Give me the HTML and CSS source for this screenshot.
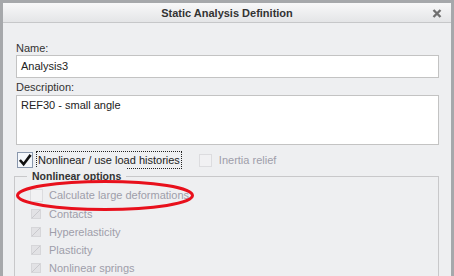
FILE: index.html
```html
<!DOCTYPE html>
<html lang="en">
<head>
    <meta charset="UTF-8">
    <title>Static Analysis Definition</title>
    <link rel="stylesheet" href="styles.css">
</head>
<body>
    <div class="window">
        <div class="titlebar">
            <span class="title">Static Analysis Definition</span>
            <svg class="close" width="10" height="9" viewBox="0 0 10 9">
                <path d="M1.5 1 L8.5 8 M8.5 1 L1.5 8" stroke="#707070" stroke-width="2.4"/>
            </svg>
        </div>

        <div class="content">
            <label class="field-label">Name:</label>
            <div class="input">Analysis3</div>

            <label class="field-label">Description:</label>
            <div class="textarea">REF30 - small angle</div>

            <div class="option-row">
                <div class="check-item">
                    <span class="box box-big">
                        <svg width="15" height="14" viewBox="0 0 15 14">
                            <path d="M2 7 L6 11.5 L13.5 1.5" fill="none" stroke="#111" stroke-width="2.8"/>
                        </svg>
                    </span>
                    <span class="focus-label">Nonlinear / use load histories</span>
                </div>
                <div class="check-item disabled inertia">
                    <span class="box"></span>
                    <span>Inertia relief</span>
                </div>
            </div>

            <div class="group">
                <div class="legend">Nonlinear options</div>
                <div class="group-items">
                    <div class="check-item disabled first">
                        <span class="box"></span>
                        <span>Calculate large deformations</span>
                    </div>
                    <div class="check-item disabled small">
                        <span class="mini"></span>
                        <span>Contacts</span>
                    </div>
                    <div class="check-item disabled small">
                        <span class="mini"></span>
                        <span>Hyperelasticity</span>
                    </div>
                    <div class="check-item disabled small">
                        <span class="mini"></span>
                        <span>Plasticity</span>
                    </div>
                    <div class="check-item disabled small">
                        <span class="mini"></span>
                        <span>Nonlinear springs</span>
                    </div>
                </div>
            </div>

            <svg class="highlight" width="184" height="36" viewBox="0 0 184 36">
                <ellipse cx="90" cy="17.5" rx="87.5" ry="14" fill="none" stroke="#e8101c" stroke-width="3"/>
            </svg>
        </div>
    </div>
</body>
</html>
```

FILE: styles.css
```css
body {
    margin: 0;
    font-family: "Liberation Sans", Arial, sans-serif;
    font-size: 11px;
    color: #333;
    background: #eeeff1;
}

.window {
    width: 454px;
    height: 276px;
    box-sizing: border-box;
    border: 3px solid #a6a8ab;
    border-bottom: none;
    background: #eeeff1;
    overflow: hidden;
}

.titlebar {
    height: 19px;
    display: flex;
    align-items: center;
    justify-content: center;
    position: relative;
    background: linear-gradient(#f8f8f9, #e4e5e7);
    border-bottom: 1px solid #c6c7c9;
}

.title {
    font-weight: bold;
    font-size: 11px;
    color: #333;
}

.close {
    position: absolute;
    right: 9px;
    top: 6px;
}

.content {
    position: relative;
    padding: 18px 12px 0 13px;
}

.field-label {
    display: block;
    line-height: 14px;
}

.input {
    height: 21px;
    margin-bottom: 2px;
    border: 1px solid #c3c3c3;
    background: white;
    line-height: 21px;
    padding-left: 4px;
    color: #222;
}

.textarea {
    margin-top: 1px;
    border: 1px solid #c3c3c3;
    background: white;
    padding: 3px 4px;
    box-sizing: border-box;
    height: 50px;
    color: #222;
}

.option-row {
    display: flex;
    align-items: center;
    margin-top: 6px;
    height: 18px;
}

.check-item {
    display: flex;
    align-items: center;
    gap: 6px;
    height: 18px;
}

.option-row .check-item:first-child {
    margin-left: 1px;
    gap: 3px;
}

.box {
    width: 11px;
    height: 11px;
    border: 1px solid #dcdcdf;
    background: #f1f1f3;
}

.box-big {
    width: 14px;
    height: 14px;
    border: 1px solid #8a98ad;
    background: #f4f7fb;
    display: flex;
    align-items: center;
    justify-content: center;
}

.focus-label {
    border: 1px dotted #222;
    padding: 2px 1px;
    color: #222;
}

.inertia {
    margin-left: 17px;
    gap: 7px;
}

.disabled {
    color: #9e9eaa;
}

.group {
    position: relative;
    margin: 7px 0 0 -2px;
    border: 1px solid #c8c8ca;
    border-bottom: none;
    height: 120px;
}

.legend {
    position: absolute;
    top: -9px;
    left: 12px;
    padding: 0 5px;
    background: #eeeff1;
    font-weight: bold;
    color: #333;
    font-size: 10.5px;
    line-height: 16px;
}

.group-items {
    padding: 8px 0 0 15px;
    display: flex;
    flex-direction: column;
}

.check-item.first {
    height: 20px;
}

.check-item.small {
    gap: 8px;
    height: 18px;
}

.mini {
    width: 8px;
    height: 8px;
    margin-left: 1px;
    background: linear-gradient(135deg, #e2e2e5 45%, #c9c9cd 50%, #e2e2e5 55%);
    border: 1px solid #d6d6d9;
}

.highlight {
    position: absolute;
    left: 12px;
    top: 155px;
}
```
